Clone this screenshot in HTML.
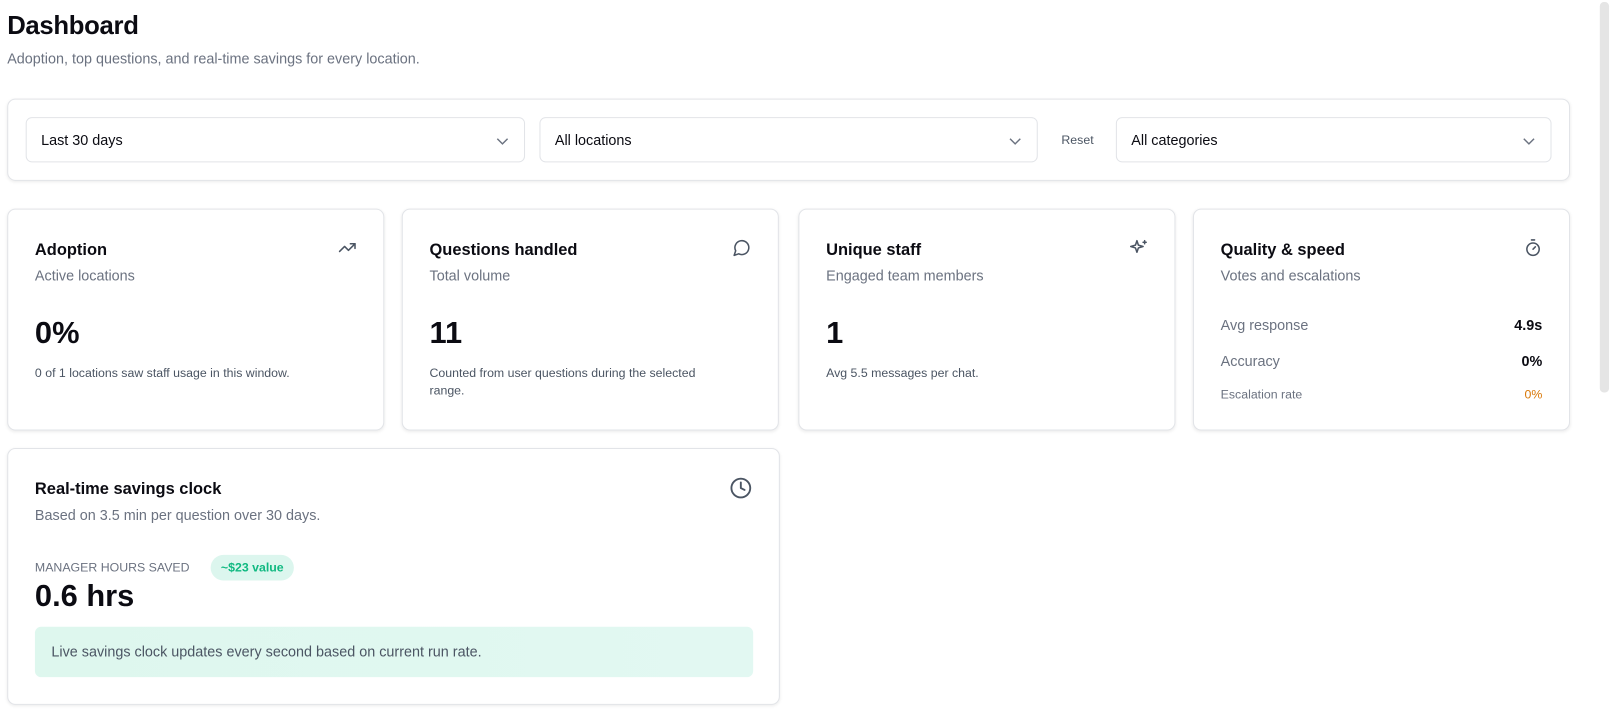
<!DOCTYPE html>
<html><head><style>
*{box-sizing:border-box;margin:0;padding:0}
body{width:1611px;height:721px;overflow:hidden;background:#fff;font-family:"Liberation Sans",sans-serif;color:#0b0b12;position:relative}
#w{position:absolute;left:0;top:0;width:1568px;height:702px;transform:scale(1.0275);transform-origin:0 0}
.abs{position:absolute}
h1{position:absolute;left:7px;top:11px;font-size:25px;font-weight:600;letter-spacing:-0.3px}
.sub{position:absolute;left:7px;top:49px;font-size:14px;color:#6b7280}
.card{position:absolute;border:1px solid #e2e4e8;border-radius:8px;background:#fff;box-shadow:0 1px 3px rgba(0,0,0,.08)}
.sel{position:absolute;top:114px;height:44px;border:1px solid #e2e4e8;border-radius:6px;font-size:14px;padding:13px 14px}
.sel svg{position:absolute;right:14px;top:15px}
.t{position:absolute;left:26px;top:31px;font-size:16px;font-weight:600}
.s{position:absolute;left:26px;top:56px;font-size:14px;color:#6b7280}
.n{position:absolute;left:26px;top:104px;font-size:30px;font-weight:600}
.d{position:absolute;left:26px;top:151px;font-size:12px;color:#4b5563;line-height:17px;width:290px}
.ic{position:absolute;right:26px;top:28px}
.row{position:absolute;left:26px;right:26px;font-size:14px;color:#6b7280}
.row b{position:absolute;right:0;top:0;color:#0b0b12;font-weight:600}
</style></head><body><div id="w">
<h1>Dashboard</h1>
<div class="sub">Adoption, top questions, and real-time savings for every location.</div>

<div class="card" style="left:7px;top:96px;width:1521px;height:80px"></div>
<div class="sel" style="left:25px;width:486px">Last 30 days<svg width="14" height="14" viewBox="0 0 14 14"><path d="M2 5l5 5 5-5" fill="none" stroke="#6b7280" stroke-width="1.4"/></svg></div>
<div class="sel" style="left:525px;width:485px">All locations<svg width="14" height="14" viewBox="0 0 14 14"><path d="M2 5l5 5 5-5" fill="none" stroke="#6b7280" stroke-width="1.4"/></svg></div>
<div class="abs" style="left:1033px;top:129px;font-size:12px;color:#4b5563">Reset</div>
<div class="sel" style="left:1086px;width:424px">All categories<svg width="14" height="14" viewBox="0 0 14 14"><path d="M2 5l5 5 5-5" fill="none" stroke="#6b7280" stroke-width="1.4"/></svg></div>

<div class="card" style="left:7px;top:203px;width:367px;height:216px">
<div class="t">Adoption</div><div class="s">Active locations</div><div class="n">0%</div>
<div class="d">0 of 1 locations saw staff usage in this window.</div>
<svg class="ic" width="18" height="18" viewBox="0 0 24 24" fill="none" stroke="#4b5563" stroke-width="2" stroke-linecap="round" stroke-linejoin="round"><path d="M22 7l-8.5 8.5-5-5L2 17"/><path d="M16 7h6v6"/></svg>
</div>
<div class="card" style="left:391px;top:203px;width:367px;height:216px">
<div class="t">Questions handled</div><div class="s">Total volume</div><div class="n">11</div>
<div class="d">Counted from user questions during the selected range.</div>
<svg class="ic" width="18" height="18" viewBox="0 0 24 24" fill="none" stroke="#4b5563" stroke-width="2" stroke-linecap="round" stroke-linejoin="round"><path d="M7.9 20A9 9 0 1 0 4 16.1L2 22z"/></svg>
</div>
<div class="card" style="left:777px;top:203px;width:367px;height:216px">
<div class="t">Unique staff</div><div class="s">Engaged team members</div><div class="n">1</div>
<div class="d">Avg 5.5 messages per chat.</div>
<svg class="ic" width="18" height="18" viewBox="0 0 24 24" fill="none" stroke="#4b5563" stroke-width="2" stroke-linecap="round" stroke-linejoin="round"><path d="M10 3l1.9 5.8L18 10.5l-6.1 1.9L10 18l-1.9-5.6L2 10.5l6.1-1.7z"/><path d="M20 3v4M22 5h-4"/></svg>
</div>
<div class="card" style="left:1161px;top:203px;width:367px;height:216px">
<div class="t">Quality &amp; speed</div><div class="s">Votes and escalations</div>
<div class="row" style="top:104px">Avg response<b>4.9s</b></div>
<div class="row" style="top:139px">Accuracy<b>0%</b></div>
<div class="row" style="top:173px;font-size:12px">Escalation rate<b style="color:#d97706;font-weight:400">0%</b></div>
<svg class="ic" width="18" height="18" viewBox="0 0 24 24" fill="none" stroke="#4b5563" stroke-width="2" stroke-linecap="round" stroke-linejoin="round"><path d="M10 2h4M12 14l3-3"/><circle cx="12" cy="14" r="8"/></svg>
</div>

<div class="card" style="left:7px;top:436px;width:752px;height:250px">
<div class="t">Real-time savings clock</div><div class="s">Based on 3.5 min per question over 30 days.</div>
<svg class="ic" width="22" height="22" viewBox="0 0 24 24" fill="none" stroke="#4b5563" stroke-width="2" stroke-linecap="round" stroke-linejoin="round" style="right:26px;top:27px"><circle cx="12" cy="12" r="10"/><path d="M12 6v6l4 2"/></svg>
<div class="abs" style="left:26px;top:108px;font-size:12px;color:#6b7280">MANAGER HOURS SAVED</div>
<div class="abs" style="left:197px;top:103px;height:25px;padding:5px 10px;border-radius:13px;background:#dcf6ee;color:#10b981;font-size:12px;font-weight:600">~$23 value</div>
<div class="abs" style="left:26px;top:127px;font-size:30px;font-weight:600">0.6 hrs</div>
<div class="abs" style="left:26px;top:173px;width:699px;height:49px;border-radius:6px;background:linear-gradient(90deg,#def7ee,#e2f8f2);font-size:14px;color:#4b5563;padding:16px 0 0 16px">Live savings clock updates every second based on current run rate.</div>
</div>

<div class="abs" style="left:1557px;top:2px;width:9px;height:380px;background:#e5e5e5;border-radius:4px"></div>
</div></body></html>
